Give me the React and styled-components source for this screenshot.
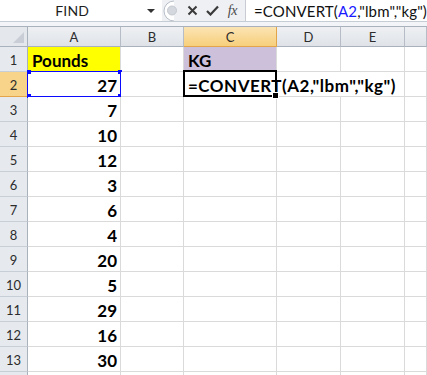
import React from "react";
import styled, { createGlobalStyle } from "styled-components";

const GlobalStyle = createGlobalStyle`
  html, body {
    margin: 0;
    padding: 0;
    background: #ffffff;
    overflow: hidden;
  }
  body {
    font-family: Lato, "Open Sans", "Liberation Sans", sans-serif;
  }
`;

const Page = styled.div`
  width: 427px;
  height: 375px;
  overflow: hidden;
  background: #ffffff;
`;

const Toolbar = styled.div`
  display: flex;
  height: 22px;
  border-bottom: 1px solid #c6ccd4;
  box-sizing: border-box;
  background: #eef0f4;
`;

const NameBox = styled.div`
  position: relative;
  width: 163px;
  display: flex;
  align-items: center;
  justify-content: center;
  padding-right: 18px;
  box-sizing: border-box;
  background: #ffffff;
  font-size: 14px;
  color: #1e1e1e;
  letter-spacing: 0.2px;
`;

const DropArrow = styled.span`
  position: absolute;
  right: 7px;
  top: 9px;
  width: 0;
  height: 0;
  border-left: 4px solid transparent;
  border-right: 4px solid transparent;
  border-top: 4px solid #333;
`;

const Buttons = styled.div`
  width: 83px;
  display: flex;
  align-items: center;
  background: #eef0f4;
`;

const Knob = styled.svg`
  width: 20px;
  height: 21px;
  flex: none;
`;

const IconBtn = styled.div`
  width: 20px;
  display: flex;
  align-items: center;
  justify-content: center;
  color: #3a3a3a;
`;

const Fx = styled.span`
  font-family: "Liberation Serif", "DejaVu Serif", serif;
  font-style: italic;
  font-size: 14px;
  color: #4a4a4a;
  letter-spacing: -0.5px;
`;

const FormulaInput = styled.div`
  flex: 1;
  display: flex;
  align-items: center;
  background: #ffffff;
  border-left: 1px solid #c9cdd3;
  padding-left: 8px;
  font-size: 15px;
  letter-spacing: 0.15px;
  color: #111;
  white-space: nowrap;
`;

const Ref = styled.span`
  color: #1a1aff;
`;

const Strip = styled.div`
  height: 5px;
  background: #f2f4f7;
  border-bottom: 1px solid #a9b1bc;
  box-sizing: border-box;
`;

const Sheet = styled.div`
  display: grid;
  grid-template-columns: 28px 93px 63px 93px 64px 64px 1fr;
  grid-template-rows: 20px;
  grid-auto-rows: 25px;
`;

const Corner = styled.div`
  position: relative;
  background: #e4e7ec;
  border-right: 1px solid #a9b1bc;
  border-bottom: 1px solid #a9b1bc;
  box-sizing: border-box;
  &::after {
    content: "";
    position: absolute;
    right: 3px;
    bottom: 3px;
    width: 0;
    height: 0;
    border-left: 11px solid transparent;
    border-bottom: 11px solid #c9ced6;
  }
`;

const ColHead = styled.div`
  display: flex;
  align-items: center;
  justify-content: center;
  font-size: 13px;
  color: #2c2c2c;
  box-sizing: border-box;
  border-right: 1px solid ${(p) => (p.$active ? "#e2a54a" : "#b6bdc7")};
  border-bottom: 1px solid ${(p) => (p.$active ? "#e2a54a" : "#a9b1bc")};
  background: ${(p) =>
    p.$active
      ? "linear-gradient(#fbe4b3, #f7cf7c)"
      : "linear-gradient(#eef0f3, #dfe3e8)"};
`;

const RowHead = styled.div`
  display: flex;
  align-items: center;
  justify-content: center;
  padding-top: 2px;
  font-size: 13px;
  color: #2c2c2c;
  box-sizing: border-box;
  border-right: 1px solid ${(p) => (p.$active ? "#e2a54a" : "#a9b1bc")};
  border-bottom: 1px solid ${(p) => (p.$active ? "#e2a54a" : "#c8ced6")};
  background: ${(p) => (p.$active ? "#f8d48a" : "#e6e9ee")};
`;

const Cell = styled.div`
  position: relative;
  display: flex;
  align-items: center;
  justify-content: ${(p) => (p.$right ? "flex-end" : "flex-start")};
  padding: 2px 3px 0 4px;
  box-sizing: border-box;
  border-right: 1px solid #dadada;
  border-bottom: 1px solid #dadada;
  background: ${(p) => p.$bg || "#ffffff"};
  font-size: 17px;
  font-weight: 700;
  letter-spacing: ${(p) => (p.$wide ? "0.5px" : "0")};
  color: #000;
  white-space: nowrap;
  grid-column: ${(p) => (p.$span ? `span ${p.$span}` : "auto")};
  z-index: ${(p) => (p.$top ? 2 : "auto")};
`;

const RefBox = styled.div`
  position: absolute;
  left: -1px;
  top: -1px;
  right: -1px;
  bottom: -1px;
  border: 1px solid #0a0aff;
  pointer-events: none;
`;

const Handle = styled.span`
  position: absolute;
  width: 4px;
  height: 4px;
  background: #0a0aff;
  left: ${(p) => (p.$r ? "auto" : "-1px")};
  right: ${(p) => (p.$r ? "-2px" : "auto")};
  top: ${(p) => (p.$b ? "auto" : "-2px")};
  bottom: ${(p) => (p.$b ? "-2px" : "auto")};
`;

const ActiveBox = styled.div`
  position: absolute;
  left: -1px;
  top: -2px;
  width: 94px;
  height: 27px;
  border: 2px solid #000;
  box-sizing: border-box;
  pointer-events: none;
`;

const FillHandle = styled.span`
  position: absolute;
  right: -4px;
  bottom: -4px;
  width: 5px;
  height: 5px;
  background: #000;
  border: 1px solid #fff;
`;

const pounds = [27, 7, 10, 12, 3, 6, 4, 20, 5, 29, 16, 30, null];
const cols = ["A", "B", "C", "D", "E", ""];

export default function App() {
  return (
    <Page>
      <GlobalStyle />
      <Toolbar>
        <NameBox>
          FIND
          <DropArrow />
        </NameBox>
        <Buttons>
          <Knob viewBox="0 0 20 21">
            <path d="M12 1 A10 10 0 0 0 12 21" fill="#ffffff" stroke="#b7bec8" />
            <circle cx="10" cy="10.5" r="4.5" fill="#d4d8de" stroke="#c3c8cf" />
          </Knob>
          <IconBtn>
            <svg width="11" height="11" viewBox="0 0 11 11">
              <path d="M1.5 1.5 L9.5 9.5 M9.5 1.5 L1.5 9.5" stroke="#3a3a3a" strokeWidth="2" />
            </svg>
          </IconBtn>
          <IconBtn>
            <svg width="13" height="11" viewBox="0 0 13 11">
              <path d="M1 6 L4.5 9.5 L12 1.5" stroke="#3a3a3a" strokeWidth="2.2" fill="none" />
            </svg>
          </IconBtn>
          <IconBtn>
            <Fx>fx</Fx>
          </IconBtn>
        </Buttons>
        <FormulaInput>
          =CONVERT(<Ref>A2</Ref>,"lbm","kg")
        </FormulaInput>
      </Toolbar>
      <Strip />
      <Sheet>
        <Corner />
        {cols.map((c) => (
          <ColHead key={c || "f"} $active={c === "C"}>
            {c}
          </ColHead>
        ))}

        <RowHead>1</RowHead>
        <Cell $bg="#ffff00">Pounds</Cell>
        <Cell />
        <Cell $bg="#ccc0da">KG</Cell>
        <Cell />
        <Cell />
        <Cell />

        {pounds.map((v, i) => {
          const row = i + 2;
          if (row === 2) {
            return (
              <React.Fragment key={row}>
                <RowHead $active>{row}</RowHead>
                <Cell $right>
                  {v}
                  <RefBox>
                    <Handle />
                    <Handle $r />
                    <Handle $b />
                    <Handle $r $b />
                  </RefBox>
                </Cell>
                <Cell />
                <Cell $span={3} $top $wide>
                  =CONVERT(A2,"lbm","kg")
                  <ActiveBox>
                    <FillHandle />
                  </ActiveBox>
                </Cell>
                <Cell />
              </React.Fragment>
            );
          }
          return (
            <React.Fragment key={row}>
              <RowHead>{v === null ? "" : row}</RowHead>
              <Cell $right>{v}</Cell>
              <Cell />
              <Cell />
              <Cell />
              <Cell />
              <Cell />
            </React.Fragment>
          );
        })}
      </Sheet>
    </Page>
  );
}
